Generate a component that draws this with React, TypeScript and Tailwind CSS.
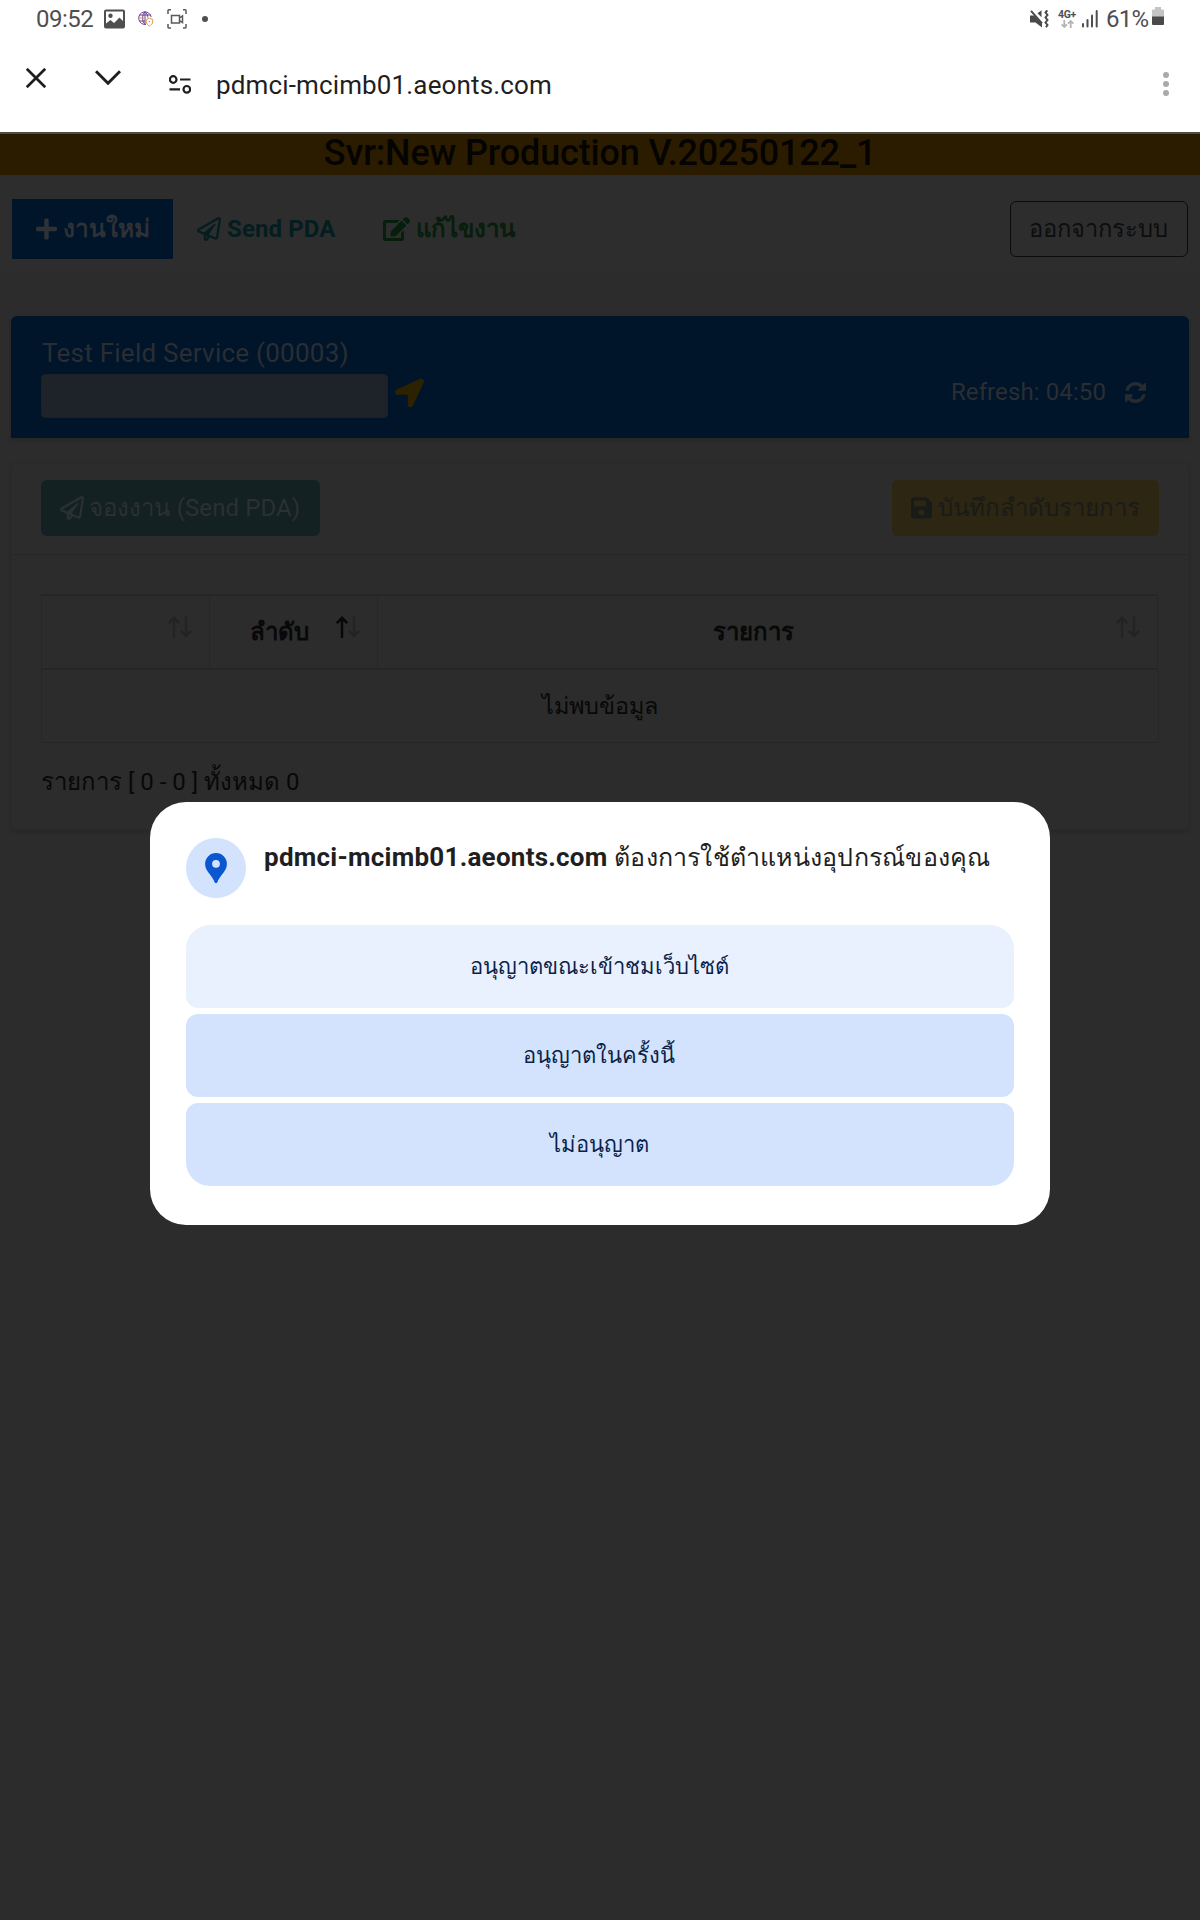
import type { ReactNode } from "react";
import { FaPlus, FaRegPaperPlane, FaEdit, FaLocationArrow, FaSave } from "react-icons/fa";

function StatusBar() {
  return (
    <div className="flex h-[37px] items-center justify-between pl-9 pr-9 text-[#4f4f4f]">
      <div className="flex items-center">
        <span className="w-[68px] pt-px text-[24px] leading-[37px] tracking-[-0.5px]">09:52</span>
        <svg className="h-5 w-[21px]" viewBox="0 0 21 20">
          <path fill="#4f4f4f" fillRule="evenodd" d="M2 0.5h17a2 2 0 0 1 2 2v15a2 2 0 0 1-2 2H2a2 2 0 0 1-2-2v-15a2 2 0 0 1 2-2ZM2 2.500v12l4.500-3.500 3.500 3 5.500-5.500 3.500 3.500v-9.500ZM6.500 4.500a2.200 2.200 0 1 1 0 4.400a2.200 2.200 0 0 1 0-4.400Z" />
        </svg>
        <svg className="ml-[13px] h-4 w-4" viewBox="0 0 16 16" fill="none" stroke="#5b2d91" strokeWidth="0.900">
          <path d="M13.200 6A6.300 6.300 0 1 0 8 13.400M7 .8C3.800 3.500 3.800 10.500 7 13.400M7 .8C9 2.500 9.800 4.500 9.900 6.500M7 .8v12.600M1.500 4h11M1.500 10h5.500" />
          <path stroke="#d79a4a" strokeWidth="1" fill="#fff" d="M.5 7h6M11.500 7.200l3.200 1.200v2.400c0 2-1.700 3.200-3.200 4.200c-1.500-1-3.200-2.200-3.200-4.200V8.400Z" />
          <circle cx="11.500" cy="10.600" r="0.800" fill="#d79a4a" stroke="none" />
        </svg>
        <svg className="ml-[13px] h-5 w-5" viewBox="0 0 20 20" fill="none" stroke="#5a5a5a" strokeWidth="1.500">
          <path d="M1 5V1.500a.7.700 0 0 1 .7-.7H4M16 .8h2.300a.7.700 0 0 1 .7.700V5M19 15v3.300a.7.700 0 0 1-.7.700H16M4 19H1.700a.7.700 0 0 1-.7-.7V15M4.500 6.500h8v7.500h-8ZM12.500 9l3-2v6.500l-3-2" />
        </svg>
        <span className="ml-[15px] size-[6px] rounded-full bg-[#4f4f4f]" />
      </div>
      <div className="flex items-center">
        <svg className="h-[18px] w-[19px]" viewBox="0 0 19 18">
          <path fill="#4a4a4a" d="M0 5.500h4l8 8v4L5.500 12.500H0ZM7.500 3.200l4-3V7.200Z" />
          <path stroke="#4a4a4a" strokeWidth="2" fill="none" d="M1 .8l11 12.500M17.300 .3l-1.800 2.200 2 2.500-2 2.500 2 2.500-2 2.500 2 2.500-1.500 2.200" />
        </svg>
        <div className="ml-2 flex w-5 flex-col items-center">
          <span className="text-[10.500px] font-bold leading-[10px] tracking-[-0.3px]">4G+</span>
          <svg className="h-2 w-[13px]" viewBox="0 0 13 8" fill="none" stroke="#b5b5b5" strokeWidth="1.800">
            <path d="M3.300 0v7M.6 4.300l2.700 2.700L6 4.300M9.700 8V1M7 3.700L9.700 1l2.700 2.700" />
          </svg>
        </div>
        <svg className="ml-[5px] h-[18px] w-4" viewBox="0 0 16 18" fill="#4f4f4f">
          <rect x="0" y="13" width="2" height="4.500" rx="1" />
          <rect x="4.500" y="9" width="2" height="8.500" rx="1" />
          <rect x="9" y="4.500" width="2" height="13" rx="1" />
          <rect x="13.700" y="0" width="2" height="17.500" rx="1" />
        </svg>
        <span className="ml-2 w-[46px] pt-px text-[24px] leading-[37px] tracking-[-0.8px]">61%</span>
        <svg className="-mt-[5px] h-[18px] w-3" viewBox="0 0 12 18">
          <path fill="#c4c4c4" d="M3 0h6v2.500h2a1 1 0 0 1 1 1V10H0V3.500a1 1 0 0 1 1-1h2Z" />
          <path fill="#4a4a4a" d="M0 9.500h12V17a1 1 0 0 1-1 1H1a1 1 0 0 1-1-1Z" />
        </svg>
      </div>
    </div>
  );
}

function BrowserBar() {
  return (
    <div className="flex h-[95px] items-center pl-[26px] pr-[31px] text-[#1f1f1f]">
      <svg className="-mt-[13px] h-5 w-5" viewBox="0 0 20 20" stroke="currentColor" strokeWidth="2.700">
        <path d="M.8.8l18.400 18.400M19.200.8L.8 19.200" />
      </svg>
      <svg className="-mt-[14px] ml-[49px] h-[15px] w-[26px]" viewBox="0 0 26 15" fill="none" stroke="currentColor" strokeWidth="3">
        <path d="M1 1.200l12 12 12-12" />
      </svg>
      <svg className="ml-[48px] h-[19px] w-[22px]" viewBox="0 0 22 19" fill="none" stroke="currentColor" strokeWidth="2.200">
        <circle cx="4.200" cy="4.500" r="3.300" />
        <circle cx="17.800" cy="14.300" r="3.300" />
        <path d="M11 4.500h10.500M.5 14.300H11" />
      </svg>
      <span className="ml-[25px] text-[26px] leading-[30px] tracking-[0.140px]">pdmci-mcimb01.aeonts.com</span>
      <div className="-mt-px ml-auto flex flex-col gap-[3px]">
        <span className="size-[6px] rounded-full bg-[#a9a9a9]" />
        <span className="size-[6px] rounded-full bg-[#a9a9a9]" />
        <span className="size-[6px] rounded-full bg-[#a9a9a9]" />
      </div>
    </div>
  );
}

function SortArrows({ active = false }: { active?: boolean }) {
  return (
    <svg className="h-[22px] w-6 shrink-0" viewBox="0 0 24 22" fill="none" strokeWidth="2.400">
      <path stroke={active ? "#070707" : "#232323"} d="M6 22V1.800M.8 7.200L6 1.800l5.200 5.400" />
      <path stroke="#232323" d="M18 0v20.200M12.800 14.800L18 20.200l5.200-5.400" />
    </svg>
  );
}

function PromptButton({ className, children }: { className: string; children: ReactNode }) {
  return (
    <button className={`h-[83px] w-full pr-[2px] text-center text-[22px] font-light leading-[30px] text-[#0b1f48] ${className}`}>
      {children}
    </button>
  );
}

export default function App() {
  return (
    <div className="relative h-[1920px] w-[1200px] overflow-hidden bg-[#2c2c2c] font-['Roboto','Noto_Sans',sans-serif] text-[24px] leading-9 text-[#080808]">
      <header className="h-[132px] bg-white">
        <StatusBar />
        <BrowserBar />
      </header>
      <div className="h-[43px] border-t-2 border-[#4c4d46] bg-[#2b1c00] text-center text-[36px] font-medium leading-[38px] tracking-[-0.160px] text-[#050402]">
        Svr:New Production V.20250122_1
      </div>

      <nav className="flex h-[97px] items-center bg-[#2d2d2d] pb-px pl-3 pr-3 pt-3">
        <div className="flex h-[60px] w-[161px] items-center bg-[#00142a] pl-6 font-bold text-[#2e3135]">
          <FaPlus className="h-[24px] w-[21px]" />
          <span className="ml-[6px] whitespace-nowrap text-[24.500px]">งานใหม่</span>
        </div>
        <div className="ml-6 flex items-center font-bold text-[#041d20]">
          <FaRegPaperPlane className="h-6 w-6" />
          <span className="ml-[6px] whitespace-nowrap tracking-[0.100px]">Send PDA</span>
        </div>
        <div className="ml-[48px] flex items-center font-bold text-[#071e0c]">
          <FaEdit className="h-6 w-[27px]" />
          <span className="ml-[6px] whitespace-nowrap">แก้ไขงาน</span>
        </div>
        <div className="ml-auto flex h-14 w-[178px] items-center justify-center whitespace-nowrap rounded-[6px] border border-[#0a0b0c] pr-[2px] text-[23.700px] font-light text-[#0c0d0d]">
          ออกจากระบบ
        </div>
      </nav>

      <main className="flex flex-col px-[11px] pt-11">
        <section className="flex h-[122px] justify-between rounded-t-[6px] bg-[#00142a] pl-[30px] pr-[43px] text-[#2a2e33] shadow-[0_2px_4px_rgba(0,0,0,0.15)]">
          <div className="pt-[21px]">
            <p className="pl-px text-[26px] leading-8 tracking-[0.250px]">Test Field Service (00003)</p>
            <div className="mt-[5px] flex">
              <div className="h-11 w-[347px] rounded-[4px] border border-[#1b2025] bg-[#1d2329]" />
              <FaLocationArrow className="ml-[7px] mt-[4px] h-[30px] w-[29px] text-[#2d2200]" />
            </div>
          </div>
          <div className="mb-[28px] flex h-9 items-center self-end">
            <span className="tracking-[0.100px]">Refresh: 04:50</span>
            <svg className="ml-[19px] h-[21px] w-[21px] text-[#262b30]" viewBox="0 0 1536 1536" fill="currentColor">
              <path d="M1511 928q0 5-1 7-64 268-268 434.500T764 1536q-146 0-282.500-55T238 1324l-129 129q-19 19-45 19t-45-19-19-45V960q0-26 19-45t45-19h448q26 0 45 19t19 45-19 45l-137 137q71 66 161 102t187 36q134 0 250-65t186-179q11-17 53-117 8-23 30-23h192q13 0 22.500 9.500t9.500 22.500zm25-800v448q0 26-19 45t-45 19h-448q-26 0-45-19t-19-45 19-45l138-138Q969 256 768 256q-134 0-250 65T332 500q-11 17-53 117-8 23-30 23H50q-13 0-22.500-9.500T18 608v-7q65-268 270-434.500T768 0q146 0 284 55.500T1297 212l130-129q19-19 45-19t45 19 19 45z" />
            </svg>
          </div>
        </section>

        <section className="mt-6 h-[368px] rounded-[6px] border border-[#2a2a2a] shadow-[0_2px_4px_rgba(0,0,0,0.15)]">
          <div className="flex h-[92px] items-center justify-between border-b border-[#262626] px-[29px] pb-[2px]">
            <div className="flex h-14 w-[279px] items-center rounded-[6px] bg-[#132123] pl-[19px] text-[#2b3031]">
              <FaRegPaperPlane className="h-6 w-6" />
              <span className="ml-[5px] whitespace-nowrap tracking-[0.100px]"><span className="font-light">จองงาน</span> (Send PDA)</span>
            </div>
            <div className="flex h-14 w-[267px] items-center rounded-[6px] bg-[#2d2612] pl-[19px] text-[#191b19]">
              <FaSave className="h-6 w-[21px]" />
              <span className="ml-[6px] whitespace-nowrap font-light">บันทึกลำดับรายการ</span>
            </div>
          </div>
          <div className="pl-[29px] pt-[39px]">
            <div className="flex h-[76px] w-[1117px] border-x border-y-2 border-[#262626] font-bold">
              <div className="flex w-[168px] justify-end border-r border-[#262626] pr-[17px] pt-5">
                <SortArrows />
              </div>
              <div className="flex w-[168px] justify-end border-r border-[#262626] pr-[17px] pt-5">
                <span className="-mt-[2px] mr-[27px] whitespace-nowrap">ลำดับ</span>
                <SortArrows active />
              </div>
              <div className="flex flex-1 pl-[335px] pr-[17px] pt-5">
                <span className="-mt-[2px] flex-1 whitespace-nowrap">รายการ</span>
                <SortArrows />
              </div>
            </div>
            <div className="h-[73px] w-[1118px] border-x border-b border-[#262626] pt-[18px] text-center text-[23.500px] font-light">
              ไม่พบข้อมูล
            </div>
            <p className="mt-[21px]"><span className="font-light">รายการ</span> [ 0 - 0 ] <span className="font-light">ทั้งหมด</span> 0</p>
          </div>
        </section>
      </main>

      <div
        role="dialog"
        className="absolute left-[150px] top-[802px] h-[423px] w-[900px] rounded-[36px] bg-white px-9 pt-9"
      >
        <div className="flex">
          <div className="flex size-[60px] items-center justify-center rounded-full bg-[#d3e3fd]">
            <svg className="h-[30px] w-[22px]" viewBox="0 0 22 30">
              <path fill="#0b57d0" fillRule="evenodd" d="M11 0a10.900 10.900 0 0 1 10.900 10.900c0 3.200-1.300 6-3.300 8.600C15.500 23.500 13.500 26 12 30H10C8.500 26 6.500 23.500 3.400 19.500C1.400 16.900 .1 14.100 .1 10.900A10.900 10.900 0 0 1 11 0Zm0 6.900a3.900 3.900 0 1 0 0 7.800a3.900 3.900 0 0 0 0-7.800Z" />
            </svg>
          </div>
          <p className="ml-[18px] mt-px whitespace-nowrap text-[26px] leading-9 text-[#1f1f1f]">
            <b className="tracking-[0.250px]">pdmci-mcimb01.aeonts.com</b>{" "}
            <span className="text-[25px] font-light tracking-[0.240px]">ต้องการใช้ตำแหน่งอุปกรณ์ของคุณ</span>
          </p>
        </div>
        <div className="mt-[27px] flex flex-col gap-[6px]">
          <PromptButton className="rounded-b-[12px] rounded-t-[24px] bg-[#e9f0fe]">อนุญาตขณะเข้าชมเว็บไซต์</PromptButton>
          <PromptButton className="rounded-[12px] bg-[#d3e3fd]">อนุญาตในครั้งนี้</PromptButton>
          <PromptButton className="rounded-b-[24px] rounded-t-[12px] bg-[#d3e3fd]">ไม่อนุญาต</PromptButton>
        </div>
      </div>
    </div>
  );
}
